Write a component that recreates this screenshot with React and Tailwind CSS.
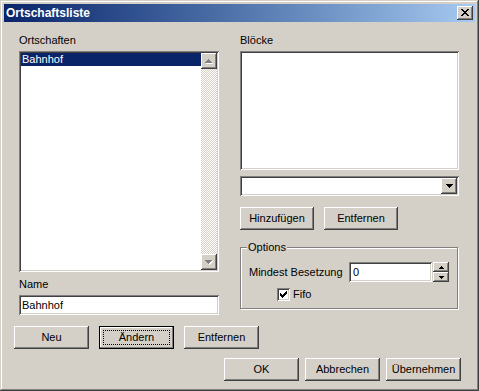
import React from "react";

const raised =
  "shadow-[inset_-1px_-1px_#404040,inset_1px_1px_#ffffff,inset_-2px_-2px_#808080,inset_2px_2px_#d4d0c8]";
const sunken =
  "shadow-[inset_1px_1px_#808080,inset_-1px_-1px_#ffffff,inset_2px_2px_#404040,inset_-2px_-2px_#d4d0c8]";

// pixel triangle, 7 wide / 4 high
const Tri = ({ up, color = "#000", w = 7 }) => {
  const rows = Math.ceil(w / 2);
  const rects = [];
  for (let i = 0; i < rows; i++) {
    const r = up ? rows - 1 - i : i;
    rects.push(<rect key={i} x={r} y={i} width={w - r * 2} height={1} fill={color} />);
  }
  return (
    <svg width={w} height={rows} viewBox={`0 0 ${w} ${rows}`} shapeRendering="crispEdges">
      {rects}
    </svg>
  );
};

const DisabledTri = ({ up }) => (
  <span className="relative block w-[8px] h-[5px]">
    <span className="absolute left-[1px] top-[1px]">
      <Tri up={up} color="#ffffff" />
    </span>
    <span className="absolute left-0 top-0">
      <Tri up={up} color="#808080" />
    </span>
  </span>
);

const Button = ({ children, className = "", isDefault }) => (
  <button
    className={`relative h-[23px] bg-[#d4d0c8] text-[11px] leading-[13px] text-black flex items-center justify-center ${
      isDefault
        ? "border border-black shadow-[inset_-1px_-1px_#808080,inset_1px_1px_#ffffff]"
        : raised
    } ${className}`}
  >
    {isDefault && (
      <span className="absolute inset-[3px] border border-dotted border-black" />
    )}
    <span className="relative">{children}</span>
  </button>
);

export default function App() {
  return (
    <div className="w-[479px] h-[391px] bg-[#d4d0c8] p-[4px] font-['Liberation_Sans',Arial,sans-serif] text-[11px] leading-[13px] text-black select-none shadow-[inset_-1px_-1px_#404040,inset_1px_1px_#d4d0c8,inset_-2px_-2px_#808080,inset_2px_2px_#ffffff]">
      {/* Title bar */}
      <div className="h-[18px] flex items-center justify-between bg-gradient-to-r from-[#0a246a] to-[#a6caf0] pl-[2px] pr-[2px]">
        <span className="text-white font-bold text-[12px] leading-[18px]">
          Ortschaftsliste
        </span>
        <div
          className={`w-[16px] h-[14px] bg-[#d4d0c8] flex items-center justify-center pb-[1px] ${raised}`}
        >
          <svg width="8" height="7" viewBox="0 0 8 7" shapeRendering="crispEdges">
            <path
              d="M0 0h2v1H0zM6 0h2v1H6zM1 1h2v1H1zM5 1h2v1H5zM2 2h4v1H2zM3 3h2v1H3zM2 4h4v1H2zM1 5h2v1H1zM5 5h2v1H5zM0 6h2v1H0zM6 6h2v1H6z"
              fill="#000"
            />
          </svg>
        </div>
      </div>

      {/* Body */}
      <div className="flex items-start pt-[12px]">
        {/* Left column */}
        <div className="ml-[15px] w-[200px] flex flex-col">
          <span>Ortschaften</span>
          <div className={`mt-[4px] h-[221px] bg-white p-[2px] flex ${sunken}`}>
            <div className="flex-1">
              <div className="h-[13px] bg-[#0a246a] text-white pl-[1px]">Bahnhof</div>
            </div>
            <div className="w-[16px] flex flex-col">
              <div className={`h-[16px] bg-[#d4d0c8] flex items-center justify-center ${raised}`}>
                <DisabledTri up />
              </div>
              <div className="flex-1 bg-[repeating-conic-gradient(#d4d0c8_0_25%,#ffffff_0_50%)] bg-[length:2px_2px]" />
              <div className={`h-[16px] bg-[#d4d0c8] flex items-center justify-center ${raised}`}>
                <DisabledTri />
              </div>
            </div>
          </div>
          <span className="mt-[6px]">Name</span>
          <div className={`mt-[4px] h-[20px] bg-white pl-[3px] flex items-center ${sunken}`}>
            Bahnhof
          </div>
        </div>

        {/* Right column */}
        <div className="ml-[21px] w-[219px] flex flex-col">
          <span>Blöcke</span>
          <div className={`mt-[4px] h-[119px] bg-white ${sunken}`} />
          <div className={`mt-[6px] h-[20px] bg-white p-[2px] flex justify-end ${sunken}`}>
            <div className={`w-[16px] h-[16px] bg-[#d4d0c8] flex items-center justify-center ${raised}`}>
              <Tri />
            </div>
          </div>
          <div className="mt-[11px] flex gap-[10px]">
            <Button className="w-[74px]">Hinzufügen</Button>
            <Button className="w-[74px]">Entfernen</Button>
          </div>

          {/* Options group */}
          <div className="relative mt-[17px] w-[218px] h-[62px] border border-[#808080] shadow-[1px_1px_0_#ffffff,inset_1px_1px_0_#ffffff] pl-[8px] pt-[14px]">
            <span className="absolute left-[6px] top-[-7px] px-[1px] bg-[#d4d0c8]">Options</span>
            <div className="flex items-center">
              <span className="w-[100px]">Mindest Besetzung</span>
              <div className={`w-[83px] h-[20px] bg-white pl-[4px] flex items-center ${sunken}`}>0</div>
              <div className="ml-[1px] w-[16px] h-[20px] flex flex-col">
                <div className={`h-[10px] bg-[#d4d0c8] flex items-center justify-center ${raised}`}>
                  <Tri up w={5} />
                </div>
                <div className={`h-[10px] bg-[#d4d0c8] flex items-center justify-center ${raised}`}>
                  <Tri w={5} />
                </div>
              </div>
            </div>
            <div className="mt-[6px] ml-[28px] flex items-center">
              <div className={`w-[13px] h-[13px] bg-white flex items-center justify-center ${sunken}`}>
                <svg width="7" height="7" viewBox="0 0 7 7" shapeRendering="crispEdges">
                  <path
                    d="M6 0h1v3H6zM5 1h1v3H5zM4 2h1v3H4zM3 3h1v3H3zM2 4h1v3H2zM1 3h1v3H1zM0 2h1v3H0z"
                    fill="#000"
                  />
                </svg>
              </div>
              <span className="ml-[3px]">Fifo</span>
            </div>
          </div>
        </div>
      </div>

      {/* Name buttons */}
      <div className="mt-[11px] ml-[10px] flex gap-[10px]">
        <Button className="w-[75px]">Neu</Button>
        <Button className="w-[75px]" isDefault>
          Ändern
        </Button>
        <Button className="w-[75px]">Entfernen</Button>
      </div>

      {/* Dialog buttons */}
      <div className="mt-[9px] mr-[14px] flex justify-end gap-[6px]">
        <Button className="w-[75px]">OK</Button>
        <Button className="w-[75px]">Abbrechen</Button>
        <Button className="w-[75px]">Übernehmen</Button>
      </div>
    </div>
  );
}
